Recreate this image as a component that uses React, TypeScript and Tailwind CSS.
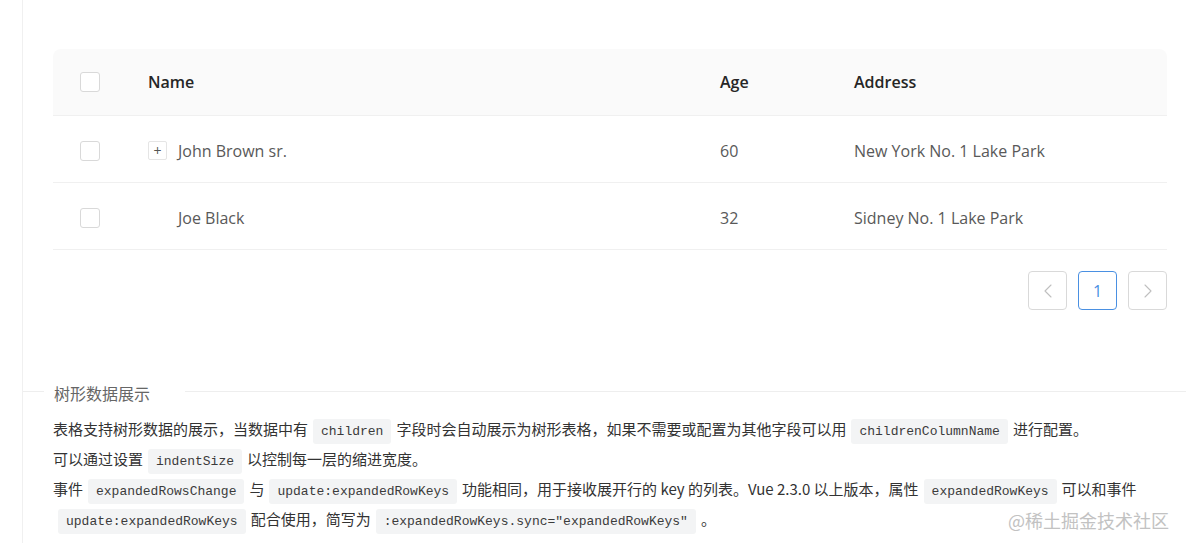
import { ChevronLeft, ChevronRight } from "lucide-react";
import type { ReactNode } from "react";

const rows = [
  { name: "John Brown sr.", age: 60, address: "New York No. 1 Lake Park", expandable: true },
  { name: "Joe Black", age: 32, address: "Sidney No. 1 Lake Park", expandable: false },
];

function Checkbox() {
  return <span className="ml-[27px] block h-[20px] w-[20px] rounded-[3px] border border-[#d9d9d9] bg-white" />;
}

function Code({ children }: { children: ReactNode }) {
  return (
    <code className="mx-[5px] rounded-[3px] bg-[#f3f4f5] px-[8px] py-[5px] font-['Liberation_Mono',monospace] text-[13px] leading-[16px] text-[#3b3b3b]">
      {children}
    </code>
  );
}

export default function App() {
  return (
    <div className="relative flex h-[543px] w-[1186px] overflow-hidden bg-white">
      <div className="w-[22px] shrink-0" />
      <div className="flex-1 border-l border-[#f0f0f0]">
        <div className="pl-[30px] pr-[19px] pt-[49px] font-['Open_Sans','Noto_Sans_CJK_SC',sans-serif]">
          <div className="grid h-[67px] grid-cols-[95px_572px_134px_1fr] items-center rounded-t-lg border-b border-[#f0f0f0] bg-[#fafafa] text-[16px] font-semibold text-[#262626]">
            <Checkbox />
            <div>Name</div>
            <div>Age</div>
            <div>Address</div>
          </div>
          {rows.map((r) => (
            <div
              key={r.name}
              className="grid h-[67px] grid-cols-[95px_572px_134px_1fr] items-center border-b border-[#f0f0f0] pt-[3px] text-[16px] text-[#595959]"
            >
              <Checkbox />
              <div className="flex items-center">
                {r.expandable ? (
                  <span className="mr-[11px] flex h-[19px] w-[19px] items-center justify-center rounded-[2px] border border-[#e5e5e5] text-[14px] leading-none text-[#555]">
                    +
                  </span>
                ) : (
                  <span className="mr-[11px] w-[19px]" />
                )}
                {r.name}
              </div>
              <div>{r.age}</div>
              <div>{r.address}</div>
            </div>
          ))}
          <div className="mt-[21px] flex justify-end gap-[11px]">
            <button type="button" className="flex h-[39px] w-[39px] items-center justify-center rounded-[4px] border border-[#d9d9d9] text-[#bfbfbf]">
              <ChevronLeft size={24} strokeWidth={1.1} />
            </button>
            <button type="button" className="flex h-[39px] w-[39px] items-center justify-center rounded-[4px] border border-[#4a90e2] text-[16px] text-[#4a90e2]">
              1
            </button>
            <button type="button" className="flex h-[39px] w-[39px] items-center justify-center rounded-[4px] border border-[#d9d9d9] text-[#bfbfbf]">
              <ChevronRight size={24} strokeWidth={1.1} />
            </button>
          </div>
        </div>

        <div className="mt-[70px] flex h-[22px] items-center">
          <div className="h-px w-[21px] bg-[#eeeeee]" />
          <div className="pl-[10px] pr-[35px] pt-[4px] font-['Noto_Sans_CJK_SC',sans-serif] text-[16px] leading-[22px] text-[#666666]">
            树形数据展示
          </div>
          <div className="h-px flex-1 bg-[#eeeeee]" />
        </div>

        <div className="mt-[12px] whitespace-nowrap pl-[30px] font-['Noto_Sans_CJK_SC',sans-serif] text-[15px] leading-[30px] text-[#333333]">
          <p className="h-[30px]">
            表格支持树形数据的展示，当数据中有<Code>children</Code>字段时会自动展示为树形表格，如果不需要或配置为其他字段可以用
            <Code>childrenColumnName</Code>进行配置。
          </p>
          <p className="h-[30px]">
            可以通过设置<Code>indentSize</Code>以控制每一层的缩进宽度。
          </p>
          <p className="h-[30px]">
            事件<Code>expandedRowsChange</Code>与<Code>update:expandedRowKeys</Code>功能相同，用于接收展开行的 key 的列表。Vue 2.3.0 以上版本，属性
            <Code>expandedRowKeys</Code>可以和事件
          </p>
          <p className="h-[30px]">
            <Code>update:expandedRowKeys</Code>配合使用，简写为<Code>:expandedRowKeys.sync="expandedRowKeys"</Code>。
          </p>
        </div>
      </div>

      <div className="absolute bottom-[14px] right-[17px] font-['Noto_Sans_CJK_SC',sans-serif] text-[18px] leading-none text-[#c2c2c2] [text-shadow:0_0_2px_#ffffff]">
        @稀土掘金技术社区
      </div>
    </div>
  );
}
